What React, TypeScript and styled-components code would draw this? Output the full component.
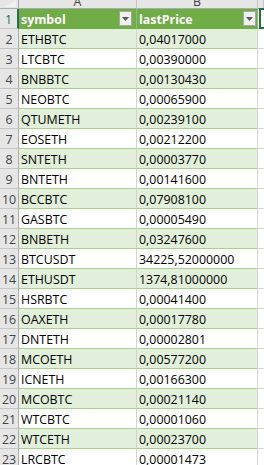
import React from 'react';
import styled, { createGlobalStyle } from 'styled-components';

const Global = createGlobalStyle`
  html, body { margin: 0; padding: 0; background: #ffffff; overflow: hidden; }
  body { font-family: "Open Sans", "Liberation Sans", sans-serif; }
`;

const data: [string, string][] = [
  ['ETHBTC', '0,04017000'],
  ['LTCBTC', '0,00390000'],
  ['BNBBTC', '0,00130430'],
  ['NEOBTC', '0,00065900'],
  ['QTUMETH', '0,00239100'],
  ['EOSETH', '0,00212200'],
  ['SNTETH', '0,00003770'],
  ['BNTETH', '0,00141600'],
  ['BCCBTC', '0,07908100'],
  ['GASBTC', '0,00005490'],
  ['BNBETH', '0,03247600'],
  ['BTCUSDT', '34225,52000000'],
  ['ETHUSDT', '1374,81000000'],
  ['HSRBTC', '0,00041400'],
  ['OAXETH', '0,00017780'],
  ['DNTETH', '0,00002801'],
  ['MCOETH', '0,00577200'],
  ['ICNETH', '0,00166300'],
  ['MCOBTC', '0,00021140'],
  ['WTCBTC', '0,00001060'],
  ['WTCETH', '0,00023700'],
  ['LRCBTC', '0,00001473'],
];

const Sheet = styled.div`
  display: grid;
  grid-template-columns: 19px 118px 121px 1fr;
  grid-template-rows: 9px;
  grid-auto-rows: 20px;
  width: 264px;
  height: 465px;
  overflow: hidden;
  font-family: "Open Sans", "Liberation Sans", sans-serif;
  font-size: 12.4px;
`;

const Corner = styled.div`
  position: relative;
  box-sizing: border-box;
  background: #e6e6e6;
  border-right: 1px solid #ababab;
  border-bottom: 1px solid #ababab;
  &::after {
    content: '';
    position: absolute;
    right: 2px;
    bottom: 1px;
    width: 0;
    height: 0;
    border-left: 11px solid transparent;
    border-bottom: 7px solid #f2f2f2;
  }
`;

const ColHead = styled.div`
  box-sizing: border-box;
  background: #e6e6e6;
  border-right: 1px solid #c6c6c6;
  border-bottom: 1px solid #ababab;
  color: #444444;
  display: flex;
  justify-content: center;
  align-items: flex-end;
  line-height: 12px;
  overflow: hidden;
`;

const RowHead = styled.div<{ $active?: boolean }>`
  box-sizing: border-box;
  background: #e6e6e6;
  border-right: ${(p) => (p.$active ? '2px solid #217346' : '1px solid #ababab')};
  border-bottom: 1px solid #c6c6c6;
  color: ${(p) => (p.$active ? '#217346' : '#444444')};
  display: flex;
  justify-content: center;
  align-items: flex-end;
  line-height: 14px;
  padding-bottom: 1px;
  overflow: hidden;
`;

type Tone = 'head' | 'band' | 'plain';

const Cell = styled.div<{ $tone: Tone }>`
  box-sizing: border-box;
  background: ${(p) => (p.$tone === 'head' ? '#70ad47' : p.$tone === 'band' ? '#e2efda' : '#ffffff')};
  border-right: 1px solid ${(p) => (p.$tone === 'head' ? '#8fbf6e' : '#d4d4d4')};
  border-bottom: 1px solid ${(p) => (p.$tone === 'head' ? '#70ad47' : '#a9d08e')};
  color: ${(p) => (p.$tone === 'head' ? '#ffffff' : '#000000')};
  font-weight: ${(p) => (p.$tone === 'head' ? 700 : 400)};
  display: flex;
  align-items: flex-end;
  justify-content: space-between;
  padding-left: 2px;
  padding-bottom: 1px;
  line-height: 14px;
  white-space: nowrap;
  overflow: hidden;
`;

const FilterButton = styled.div<{ $gap: number }>`
  box-sizing: border-box;
  align-self: center;
  flex: none;
  width: 13px;
  height: 15px;
  margin-right: ${(p) => p.$gap}px;
  margin-bottom: -1px;
  background: #f0f0f0;
  border: 1px solid #a6a6a6;
  display: flex;
  align-items: center;
  justify-content: center;
`;

const Outside = styled.div<{ $selected?: boolean }>`
  position: relative;
  box-sizing: border-box;
  background: #ffffff;
  border-bottom: 1px solid #d4d4d4;
  ${(p) =>
    p.$selected &&
    `
    &::before {
      content: '';
      position: absolute;
      top: -1px;
      bottom: -1px;
      left: 1px;
      right: -3px;
      border: 2px solid #217346;
    }
  `}
`;

const Arrow = () => (
  <svg width="7" height="4" viewBox="0 0 7 4">
    <polygon points="0,0 7,0 3.5,4" fill="#595959" />
  </svg>
);

export default function App() {
  return (
    <>
      <Global />
      <Sheet>
        <Corner />
        <ColHead>A</ColHead>
        <ColHead>B</ColHead>
        <ColHead />

        <RowHead $active>1</RowHead>
        <Cell $tone="head">
          <span>symbol</span>
          <FilterButton $gap={4}>
            <Arrow />
          </FilterButton>
        </Cell>
        <Cell $tone="head">
          <span>lastPrice</span>
          <FilterButton $gap={1}>
            <Arrow />
          </FilterButton>
        </Cell>
        <Outside $selected />

        {data.map(([sym, price], i) => {
          const tone: Tone = i % 2 === 0 ? 'band' : 'plain';
          return (
            <React.Fragment key={sym}>
              <RowHead>{i + 2}</RowHead>
              <Cell $tone={tone}>{sym}</Cell>
              <Cell $tone={tone}>{price}</Cell>
              <Outside />
            </React.Fragment>
          );
        })}
      </Sheet>
    </>
  );
}
